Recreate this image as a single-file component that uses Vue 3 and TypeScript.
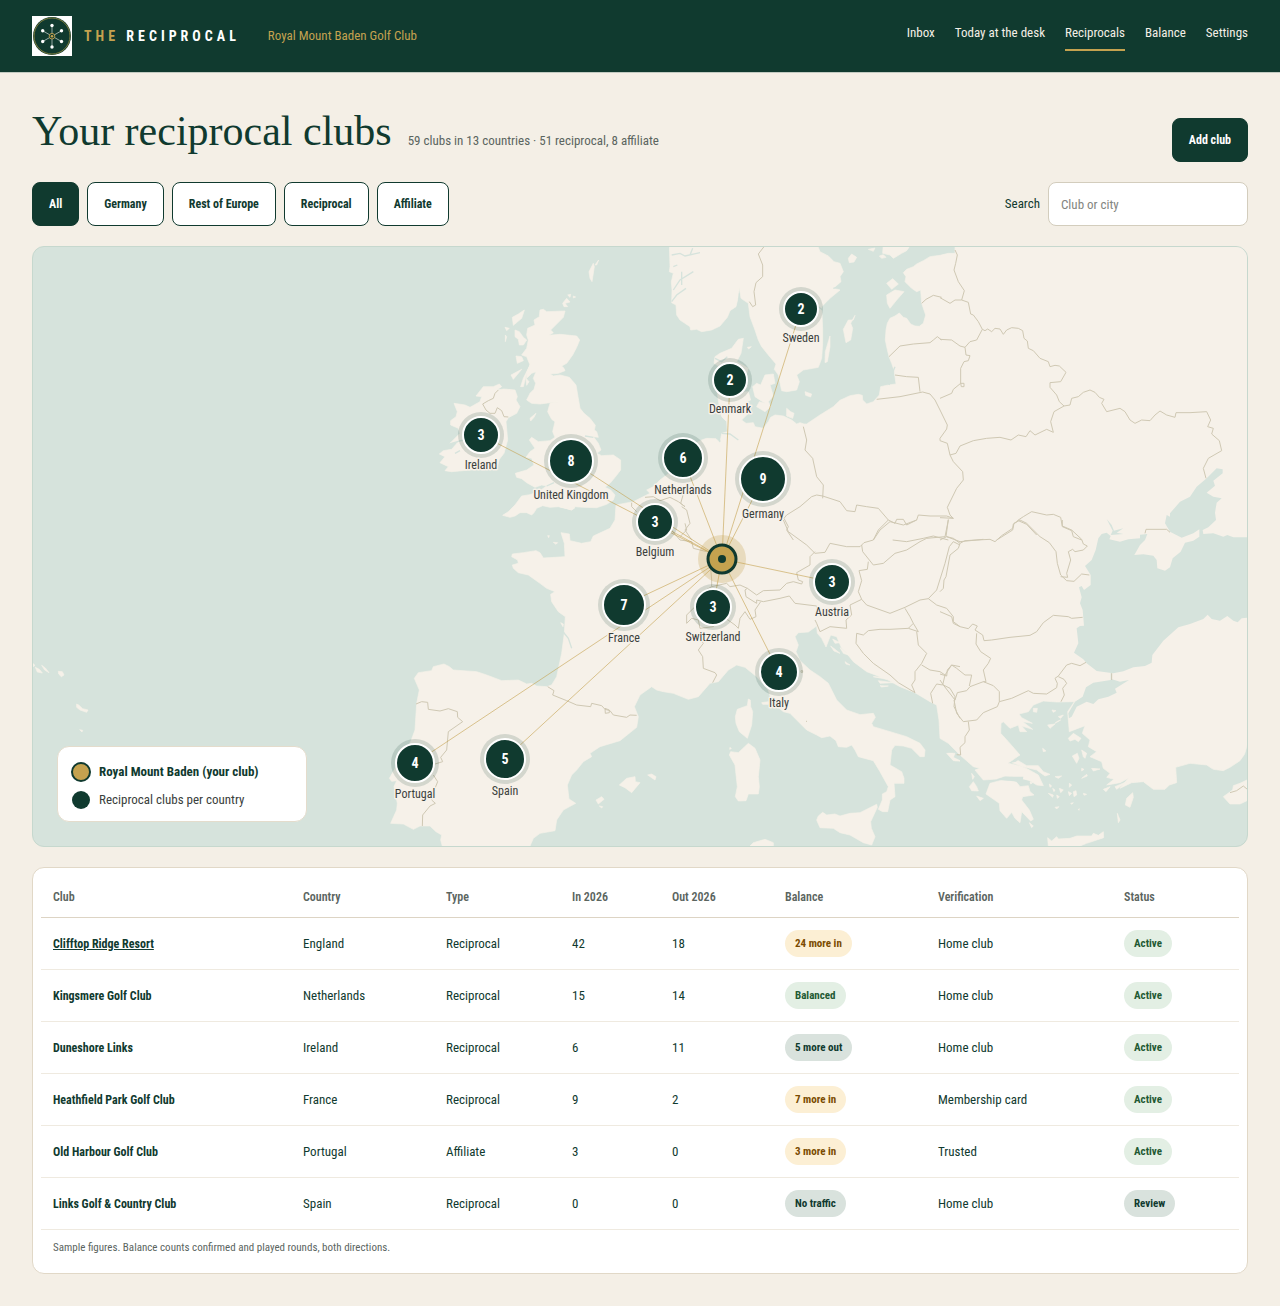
<script setup lang="ts">
import { computed, ref } from 'vue'

interface Pin { name: string; count: number; x: number; y: number; r: number }
interface Club {
  name: string; country: string; type: string; inbound: number; outbound: number
  balance: string; tone: string; verification: string; status: string
}

const navItems = ['Inbox', 'Today at the desk', 'Reciprocals', 'Balance', 'Settings']
const filters = ['All', 'Germany', 'Rest of Europe', 'Reciprocal', 'Affiliate']
const activeFilter = ref('All')
const query = ref('')

const home = { x: 689, y: 312 }
const pins: Pin[] = [
  { name: 'Sweden', count: 2, x: 768, y: 62, r: 17 },
  { name: 'Denmark', count: 2, x: 697, y: 133, r: 17 },
  { name: 'Ireland', count: 3, x: 448, y: 188, r: 18 },
  { name: 'United Kingdom', count: 8, x: 538, y: 214, r: 22 },
  { name: 'Netherlands', count: 6, x: 650, y: 211, r: 20 },
  { name: 'Germany', count: 9, x: 730, y: 232, r: 23 },
  { name: 'Belgium', count: 3, x: 622, y: 275, r: 18 },
  { name: 'Austria', count: 3, x: 799, y: 335, r: 18 },
  { name: 'France', count: 7, x: 591, y: 358, r: 21 },
  { name: 'Switzerland', count: 3, x: 680, y: 360, r: 18 },
  { name: 'Italy', count: 4, x: 746, y: 425, r: 19 },
  { name: 'Portugal', count: 4, x: 382, y: 516, r: 19 },
  { name: 'Spain', count: 5, x: 472, y: 512, r: 20 },
]

const clubs: Club[] = [
  { name: 'Clifftop Ridge Resort', country: 'England', type: 'Reciprocal', inbound: 42, outbound: 18, balance: '24 more in', tone: 'amber', verification: 'Home club', status: 'Active' },
  { name: 'Kingsmere Golf Club', country: 'Netherlands', type: 'Reciprocal', inbound: 15, outbound: 14, balance: 'Balanced', tone: 'green', verification: 'Home club', status: 'Active' },
  { name: 'Duneshore Links', country: 'Ireland', type: 'Reciprocal', inbound: 6, outbound: 11, balance: '5 more out', tone: 'slate', verification: 'Home club', status: 'Active' },
  { name: 'Heathfield Park Golf Club', country: 'France', type: 'Reciprocal', inbound: 9, outbound: 2, balance: '7 more in', tone: 'amber', verification: 'Membership card', status: 'Active' },
  { name: 'Old Harbour Golf Club', country: 'Portugal', type: 'Affiliate', inbound: 3, outbound: 0, balance: '3 more in', tone: 'amber', verification: 'Trusted', status: 'Active' },
  { name: 'Links Golf & Country Club', country: 'Spain', type: 'Reciprocal', inbound: 0, outbound: 0, balance: 'No traffic', tone: 'slate', verification: 'Home club', status: 'Review' },
]

const visibleClubs = computed(() => {
  const q = query.value.trim().toLowerCase()
  return clubs.filter((c) => {
    const f = activeFilter.value
    const passes = f === 'All' || (f === 'Rest of Europe' ? c.country !== 'Germany' : c.country === f || c.type === f)
    return passes && (!q || c.name.toLowerCase().includes(q))
  })
})
</script>

<template>
  <div class="page">
    <header class="topbar">
      <a class="brand" href="#">
        <svg class="logo" viewBox="0 0 40 40" aria-hidden="true">
          <rect width="40" height="40" fill="#fff" />
          <circle cx="20" cy="20" r="19" fill="#103a2f" />
          <circle cx="20" cy="20" r="18" fill="none" stroke="#7c7a3c" stroke-width="1" />
          <g stroke="#b9c7c1" stroke-width="0.8">
            <path d="M20 9.500V31M10.700 14.800L29.500 25.500M29.500 14.800L10.700 25.500" />
          </g>
          <g fill="#fff">
            <circle cx="20" cy="9.500" r="1.700" /><circle cx="20" cy="31" r="1.700" />
            <circle cx="10.700" cy="14.800" r="1.700" /><circle cx="29.500" cy="14.800" r="1.700" />
            <circle cx="10.700" cy="25.500" r="1.700" /><circle cx="29.500" cy="25.500" r="1.700" />
          </g>
          <circle cx="20" cy="20.200" r="2.800" fill="#103a2f" stroke="#c4a24f" stroke-width="0.900" />
          <circle cx="20" cy="20.200" r="1.300" fill="#c4a24f" />
        </svg>
        <span class="wordmark"><span class="gold">THE</span> RECIPROCAL</span>
      </a>
      <span class="club-name">Royal Mount Baden Golf Club</span>
      <nav class="nav">
        <a v-for="item in navItems" :key="item" href="#" :class="{ current: item === 'Reciprocals' }">{{ item }}</a>
      </nav>
    </header>

    <main class="main">
      <div class="title-row">
        <h1>Your reciprocal clubs</h1>
        <p class="summary">59 clubs in 13 countries · 51 reciprocal, 8 affiliate</p>
        <button type="button" class="btn solid add">Add club</button>
      </div>

      <div class="toolbar">
        <button
          v-for="f in filters" :key="f" type="button" class="btn"
          :class="{ solid: f === activeFilter }" @click="activeFilter = f"
        >{{ f }}</button>
        <div class="search">
          <label for="club-search">Search</label>
          <input id="club-search" v-model="query" type="text" placeholder="Club or city" />
        </div>
      </div>

      <section class="map" aria-label="Map of clubs">
        <svg class="map-svg" viewBox="0 0 1214 599">
          <svg x="0" y="0" width="1214" height="599" viewBox="99 741 3642 1797">
            <!-- mainland and Scandinavia -->
            <g class="land" transform="translate(1920 720)">
              <path d="M1830 10L945 10L945 40L925 40L900 46L870 50L850 62L830 72L820 80L800 88L790 98L798 110L795 125L815 145L830 155L842 150L845 190L857 225L850 250L838 259L825 258L812 252L800 235L790 232L778 219L765 228L750 235L742 250L738 270L736 300L741 325L747 350L755 370L762 390L768 432L745 435L722 440L718 465L700 485L680 492L668 480L667 466L655 463L630 467L600 481L580 500L540 525L500 552L492 552L480 548L470 552L455 540L430 528L405 525L392 532L385 545L370 565L345 560L340 548L318 550L305 540L325 520L330 500L320 480L300 470L322 440L315 415L325 385L308 375L290 365L303 340L310 295L295 298L275 325L240 340L225 350L222 370L235 378L225 420L228 430L235 480L240 515L245 530L260 545L262 575L245 580L240 608L228 596L200 595L185 600L150 620L120 655L100 690L60 720L40 740L20 750L30 760L-20 785L-72 795L-75 840L-90 865L-140 888L-148 905L-175 910L-210 902L-212 882L-237 878L-227 910L-225 950L-255 952L-290 954L-300 938L-312 932L-350 938L-383 942L-385 950L-367 960L-365 970L-383 975L-380 985L-365 998L-335 1005L-300 1030L-280 1045L-255 1055L-268 1063L-265 1085L-245 1115L-224 1130L-227 1180L-235 1240L-250 1310L-265 1335L-280 1340L-310 1338L-325 1330L-340 1332L-365 1320L-415 1322L-460 1305L-490 1295L-560 1290L-572 1280L-588 1272L-620 1280L-625 1292L-665 1298L-677 1315L-662 1350L-670 1390L-675 1470L-688 1505L-720 1560L-752 1615L-745 1624L-730 1622L-738 1640L-728 1690L-730 1710L-748 1750L-710 1752L-680 1768L-660 1758L-630 1758L-612 1775L-595 1785L-598 1800L-590 1830L-335 1830L-320 1795L-300 1780L-255 1772L-250 1740L-230 1710L-193 1690L-213 1677L-218 1635L-205 1605L-190 1590L-170 1565L-145 1550L-150 1540L-120 1520L-60 1502L-35 1482L-10 1462L-5 1430L-17 1400L0 1365L35 1340L50 1350L70 1355L100 1360L145 1378L175 1370L210 1330L235 1325L265 1290L290 1275L315 1282L350 1310L385 1350L395 1385L430 1415L450 1420L470 1440L500 1470L530 1485L545 1493L570 1488L588 1502L595 1520L620 1522L635 1515L645 1530L655 1550L700 1562L720 1595L745 1640L740 1655L727 1662L727 1680L715 1708L728 1715L743 1715L750 1680L765 1670L762 1630L792 1630L792 1615L785 1595L750 1575L755 1530L765 1516L790 1518L815 1525L840 1550L853 1550L855 1530L840 1510L800 1490L700 1460L695 1450L706 1432L700 1420L660 1424L620 1410L590 1380L565 1330L540 1310L510 1290L480 1262L468 1235L475 1215L465 1190L475 1178L505 1176L530 1158L532 1180L545 1195L558 1221L572 1185L590 1190L605 1225L620 1240L640 1265L680 1295L740 1318L780 1340L825 1358L870 1385L890 1395L897 1440L900 1495L925 1510L960 1545L1000 1580L1020 1585L1005 1590L1030 1620L1070 1617L1095 1608L1130 1612L1170 1622L1190 1635L1210 1637L1195 1605L1150 1580L1105 1570L1125 1555L1140 1545L1105 1505L1082 1480L1083 1450L1090 1445L1110 1465L1135 1455L1140 1475L1160 1475L1145 1458L1178 1468L1148 1445L1177 1450L1145 1433L1137 1422L1165 1415L1180 1395L1210 1383L1250 1386L1303 1385L1283 1415L1288 1475L1335 1457L1327 1480L1350 1500L1345 1520L1370 1535L1350 1550L1385 1565L1390 1585L1410 1600L1400 1612L1422 1618L1400 1635L1440 1628L1465 1615L1440 1645L1475 1628L1510 1625L1540 1648L1575 1648L1588 1635L1610 1628L1607 1582L1650 1570L1700 1575L1720 1588L1750 1592L1770 1582L1800 1562L1814 1542L1820 1520L1830 1500Z" />
              <path d="M88 10L90 80L88 95L100 100L94 125L96 150L95 188L108 195L110 225L120 240L150 260L152 270L170 268L185 275L215 270L240 258L262 232L270 212L288 200L295 170L298 142L303 175L325 190L330 230L345 270L355 300L365 320L385 345L408 372L403 388L415 405L425 452L440 455L470 450L478 425L470 405L490 390L535 382L545 355L548 310L548 270L545 200L570 175L600 150L580 145L603 125L600 110L610 95L600 70L582 65L565 48L540 35L530 10Z" />
              <path d="M645 226L640 240L625 240L610 268L618 308L632 300L638 265L632 250ZM570 288L556 335L555 368L562 365L570 320ZM495 455L515 462L512 471L497 466ZM350 430L362 435L375 405L400 402L405 430L390 435L400 468L385 485L392 500L375 515L350 500L358 485L375 490L345 470L338 440ZM285 458L325 455L332 480L310 490L295 480ZM440 505L452 515L462 520L458 535L440 528ZM740 165L765 150L792 155L770 180L750 205L742 190ZM740 130L758 116L775 132L755 148ZM625 55L635 42L650 52L642 66L628 68ZM730 10L815 10L800 32L785 40L760 55L750 45L728 40ZM685 28L705 24L700 34ZM718 48L730 44L738 52L725 55ZM322 322L334 320L326 327Z" />
            </g>
            <!-- British Isles -->
            <g class="land" transform="translate(1140 720)">
              <path d="M480 210L490 208L500 215L555 213L550 232L530 252L512 270L520 278L506 286L540 283L590 288L599 300L590 322L578 345L560 370L545 378L552 385L555 392L535 400L510 402L520 408L540 405L568 412L588 435L594 470L600 505L612 520L630 535L646 556L643 570L650 575L655 592L640 590L655 610L663 630L650 640L665 647L700 645L722 660L722 690L705 712L690 730L675 742L692 750L705 765L700 780L680 793L650 803L610 802L585 800L575 810L560 806L535 800L510 802L488 797L470 805L462 818L455 825L440 818L420 818L405 828L390 832L368 826L385 815L405 795L425 768L450 764L480 752L500 738L485 735L465 742L440 728L425 716L410 712L406 700L440 690L462 675L455 655L438 652L450 635L465 625L448 600L455 592L475 605L510 602L525 592L518 575L525 545L515 538L503 515L510 490L535 486L510 488L480 492L455 490L440 480L450 460L462 448L467 430L460 415L468 395L455 400L440 415L440 400L450 375L440 350L425 345L440 325L445 300L440 285L443 265L465 255L462 240L478 230Z" />
              <path d="M358 432L365 440L350 450L372 447L405 450L412 470L408 480L420 500L410 520L385 533L378 545L383 600L372 640L358 658L350 688L270 690L215 695L195 692L205 680L180 668L195 650L178 642L190 632L215 628L235 605L210 610L240 580L235 565L212 555L212 542L228 530L232 515L222 490L255 495L270 502L300 485L305 470L288 468L310 440L340 440Z" />
              <path d="M433 210L425 235L400 256L397 232L415 222ZM405 270L418 275L430 292L440 300L430 315L418 315L415 298L405 290ZM375 262L388 265L380 272ZM376 285L380 290L376 305ZM408 348L425 350L430 362L412 370ZM393 405L425 388L400 418ZM422 440L430 415L455 365L440 400L430 440ZM438 415L447 425L440 436ZM450 535L468 520L462 532L452 543ZM627 95L640 70L643 80L636 125L630 115ZM645 75L656 60L650 75ZM548 190L560 175L570 186L555 190L563 200L552 200ZM563 165L572 163L570 172ZM580 168L587 171L580 174ZM540 800L585 803L575 810ZM503 887L508 887L506 893Z" />
            </g>
            <!-- western and central Mediterranean -->
            <g class="land" transform="translate(1140 1560)">
              <path d="M718 795L740 775L765 770L766 785L780 788L755 818L735 803ZM803 765L815 762L828 770L825 780ZM648 840L665 830L672 838L655 852ZM658 858L668 860L665 864ZM520 67L533 68L528 73ZM542 308L550 312L549 320Z" />
            </g>
            <g class="land" transform="translate(1980 1560)">
              <path d="M470 900L475 888L488 877L500 885L525 882L540 888L570 880L600 878L650 853L652 862L632 905L634 925L645 950L635 975L610 968L570 945L540 938L520 925L480 923ZM265 670L285 685L300 720L295 770L298 800L295 822L265 822L258 842L235 843L226 830L232 800L225 735L208 705L212 695L235 698ZM265 537L271 540L272 560L278 575L275 615L262 655L238 635L228 610L226 590L232 568L262 557ZM270 978L280 968L315 958L340 968L340 985L270 985ZM305 548L325 545L325 553L308 553ZM865 700L885 700L880 712L900 722L885 722ZM210 682L214 686L209 688ZM640 470L670 472L680 478ZM655 482L700 488L660 490ZM660 497L685 498L665 501ZM518 357L540 368L525 370ZM512 378L525 388L540 400L522 393ZM540 383L570 407L550 400ZM555 425L570 435L558 432Z" />
            </g>
            <g class="land" transform="translate(2820 1560)">
              <path d="M150 790L180 782L200 780L230 787L240 800L265 797L270 815L282 825L248 830L245 840L268 870L280 898L272 903L245 875L240 908L225 895L215 877L200 895L180 872L178 850L138 822ZM215 728L235 722L260 737L295 737L310 755L330 763L315 768L290 750L250 740ZM323 953L335 963L350 950L355 957L390 955L410 948L455 948L460 940L475 946L490 935L491 953L440 970L415 980L325 980ZM925 778L900 790L880 797L878 810L850 830L870 852L900 852L925 840ZM578 818L580 832L570 862L556 855L560 835ZM385 655L400 640L423 655L415 665L405 658L390 663ZM397 708L412 700L417 715L410 730ZM425 690L440 700L435 715L430 710ZM455 745L480 747L460 753ZM280 565L292 565L290 577L280 575ZM336 570L348 572L340 577ZM323 615L345 612L330 625ZM345 610L362 600L350 605ZM355 590L370 585L362 595ZM308 685L318 693L310 695ZM95 760L103 770L98 778ZM88 800L100 785L110 800L115 813L95 812ZM110 828L130 835L120 842ZM20 700L40 700L38 715L60 723L40 722ZM425 775L440 763L442 768ZM425 745L432 748L425 753ZM388 790L395 795L388 802ZM385 815L395 820L388 827ZM400 815L408 812L410 825L402 830ZM358 805L370 810L362 818ZM338 805L345 810L342 815ZM328 792L335 798L330 802ZM345 770L365 768L355 775ZM350 825L358 830L352 835ZM345 862L357 860L350 867ZM325 820L340 825L338 832ZM392 850L400 848L396 853ZM430 820L440 823L432 826ZM490 808L510 800L498 815ZM525 800L560 785L530 808ZM532 880L540 900L535 908ZM268 908L280 918L275 923ZM270 785L278 788L272 792ZM415 868L418 866L417 871Z" />
            </g>
            <!-- Azores -->
            <g class="land" transform="translate(60 1920)">
              <path d="M38 70L45 76L40 80ZM46 82L58 88L67 99L52 96ZM65 76L76 84L87 98L74 90ZM115 94L127 95L132 105L124 110L116 102ZM170 192L176 195L188 206L204 210L200 217L180 210L170 202ZM179 269L188 271L186 276Z" />
            </g>

            <!-- Black Sea, Azov, Marmara -->
            <g class="sea" transform="translate(2820 1560)">
              <path d="M475 55L485 42L500 38L512 48L508 58L540 65L565 58L600 55L600 44L622 42L615 60L600 75L583 105L610 103L640 107L650 120L652 145L675 152L690 142L698 115L722 95L735 68L760 62L778 50L778 28L760 40L725 53L690 35L675 10L680 -15L690 -10L690 -20L720 -55L750 -70L770 -100L800 -125L830 -155L848 -152L848 -140L820 -118L825 -103L800 -82L820 -70L845 -65L830 -52L825 -22L828 0L805 22L788 30L790 42L820 40L850 50L862 45L880 52L930 52L930 292L905 295L893 307L880 302L862 288L840 302L815 297L803 284L790 297L750 312L715 322L670 362L637 405L635 428L615 438L580 442L550 454L520 460L470 453L440 430L430 418L402 398L415 370L410 325L420 318L432 317L428 270L420 250L425 232L417 202L425 198L432 210L452 195L452 165L435 138L455 120L467 90Z" />
              <path d="M512 458L516 458L516 478L540 485L567 480L525 506L530 518L505 530L475 538L460 552L440 545L410 560L395 590L387 595L385 580L405 545L428 530L438 502L460 488L512 480ZM204 730L225 720L238 708L228 725ZM170 778L200 770L250 770L248 783L200 782Z" />
              <path d="M500 -3L515 15L522 32L550 25L530 38L550 42L512 45L518 32Z" />
            </g>
            <!-- fjords and estuaries -->
            <g class="inlet" transform="translate(1920 720)">
              <path d="M95 45L120 40L135 48L180 38M150 45L158 25M95 185L110 165L138 145M100 150L120 120L160 95M125 135L125 95M100 80L112 75M295 200L298 160M240 605L235 590M245 580L270 582L295 600M225 355L245 365L262 350M580 145L600 140M535 200L548 210M-235 1170L-215 1195L-205 1225M747 435L755 405L765 380" />
            </g>
            <g class="inlet" transform="translate(1140 720)">
              <path d="M210 612L235 604L250 600M225 640L240 632M500 738L522 728M640 592L615 588" />
            </g>

            <!-- borders, east -->
            <g class="border" transform="translate(2820 720)">
              <path d="M45 30L52 45L47 70L42 90L55 125L73 152L65 180L85 187L92 222L100 225L115 245L127 268L135 272L143 267L155 275L165 265L180 267L190 283L200 270L215 263L235 265L248 272L252 295L262 303L265 325L280 332L300 355L325 365L330 380L345 376L358 378L378 397L362 425L330 428L330 442L350 465L358 485L372 498L390 495L395 475L415 470L430 457L450 450L465 457L478 472L492 478L485 490L500 515L540 505L555 515L570 540L585 550L605 540L630 542L645 525L660 513L680 525L705 532L708 518L750 518L800 515L812 540L803 560L820 565L815 582L838 602L845 632L805 655L790 685L798 715" />
              <path d="M0 173L30 190L45 180L65 180M0 298L35 300L60 318L75 322L90 305L110 300L127 268M75 322L78 345L90 347L85 362L72 365L62 385L62 430L40 448L35 460L0 475M62 430L72 430L72 440L64 440ZM-15 480L0 510L22 555L20 567L0 595L0 602L22 610L30 645L48 640L60 618L100 602L140 595L180 592L213 600L235 585L258 590L270 572L285 585L320 568L340 577L332 545L342 515L372 498M30 645L40 665L68 695L70 720L50 745L22 802L30 825L40 835L0 833M25 838L18 890M0 900L20 890L60 905L130 898M232 842L250 830L275 815L320 825L340 823L362 832L367 860L395 872L400 890L425 900M615 880L618 868L680 868L690 877M170 900L218 870L222 850L235 842L260 853L290 885" />
            </g>
            <g class="border" transform="translate(2820 1560)">
              <path d="M20 50L40 55L60 70L75 62L110 60L150 58L165 65L185 47L218 25L220 12L240 0L260 10L300 50L328 68L348 95L352 130L362 165L380 182L402 184L425 162L448 165M362 170L383 172L380 160L392 120L385 95L398 88L405 95L430 90L442 78L430 72L425 58L395 30L367 18L367 0M60 70L55 85L30 105L18 170L12 180L10 205L0 215M0 275L35 290L40 310L60 320L85 326L98 312L112 318L105 330L128 345L132 362L155 360L210 352L270 346L290 335L310 308L340 286L385 290L395 295L428 292M110 340L108 372L122 395L152 415L145 430L130 450L138 485L130 485L90 500L80 512L52 518L45 540L10 495L0 480M130 485L160 497L178 515L178 545L215 535L265 512L280 520L320 522L350 503L352 490L345 475L355 468L380 435L395 430L420 437L438 427M355 470L372 478L380 490L368 505L373 525L363 545M178 545L172 560L130 578L110 600L70 605L50 580L42 540M85 605L88 630L75 650L75 668L60 682L62 705L50 704M0 462L20 468L22 450L35 435L50 445L75 465L95 465L88 498M870 818L890 812L910 798L922 808M515 460L515 480" />
            </g>
            <!-- borders, north and central -->
            <g class="border" transform="translate(1920 720)">
              <path d="M372 20L355 42L368 75L368 110L348 128L342 155L347 195L338 200L328 185M845 190L858 178L880 166L905 172M747 350L780 318L820 312L870 308L880 300L892 290L905 300M765 405L800 410L835 412L840 455M710 478L780 470L848 456L870 462L885 480M490 560L500 600L495 630L518 655L530 710L550 735L548 775M548 768L530 765L515 770L480 800L440 825L432 835L445 860L440 870L460 900M548 768L600 785L620 812L645 815L650 795L680 800L715 805L745 840L765 850L770 838L790 838L800 855L830 840L835 825L870 828L920 828L940 835M745 840L715 870L700 900M758 900L800 905L850 895L880 888L925 900M15 772L40 770L60 782L90 772L115 785L135 800L122 790L135 745M125 800L140 810L150 850L135 870L155 900" />
            </g>
            <g class="border" transform="translate(1980 1560)">
              <path d="M370 0L385 35L440 75L465 100L495 97L510 70L560 80L600 80L612 68L640 60L660 30L690 5L730 15L770 0M465 95L450 110L450 135L410 158L415 180L428 185L425 192L400 185L380 190L360 210L310 212L290 225L262 205L255 210L258 230L290 250L290 240L310 245L360 235L388 228L405 250L470 258L470 280M210 200L240 195L262 205M150 120L155 180L155 200L200 190L210 200M155 200L120 220L105 260L80 285L80 310L95 295L115 300L120 325L160 320L190 290L225 315L235 325L240 295L255 275L270 298L288 290L285 270L302 245M115 345L130 370L115 390L128 410L130 445L165 458L170 465L158 488M605 75L608 95L640 135L670 130L705 100L740 90L780 65L800 55L855 50L865 0M625 125L622 148L597 152L605 182L595 215L605 238L620 255L690 280L735 262L780 240L805 236L830 210L855 130L868 80L880 65L900 75M605 238L570 255L575 285L558 300L560 325L510 320L480 335L470 310L465 300M735 265L750 290L760 310L745 325L690 328L660 328L625 332L610 345L590 340L588 370L610 400L640 430L690 465L715 488L765 518M770 335L775 375L800 400L785 430L765 455L765 480L755 495L765 518M760 310L775 335L745 325M785 435L810 450L840 455L855 465L848 495L830 492L812 520L818 550M805 236L830 255L860 265L880 290L880 305L900 320M855 465L875 435L900 440M850 495L870 505L885 530L882 560L900 595M60 50L80 30L75 10M0 10L30 25L60 60L95 65L100 85L140 95M423 452h5v5h-5zM438 604h3" />
            </g>
            <g class="border" transform="translate(1140 1560)">
              <path d="M503 500L522 512L518 525L560 542L590 555L632 560L635 550L665 557L675 568L690 572L700 585L740 592L750 585L770 586M675 565L688 570L688 578L676 580ZM108 552L125 545L143 547L145 568L180 573L205 566L232 575L233 592L248 605L205 635L200 690L182 712L188 725L165 732M160 765L173 785L165 805L150 815L155 840L166 850L150 858L128 885L127 918" />
            </g>
            <g class="border" transform="translate(1140 720)">
              <path d="M355 450L345 460L340 475L325 482L308 492L318 510L330 520L345 520L352 503L365 512L372 530L385 531M755 788L755 800L770 815" />
            </g>
          </svg>

          <g class="routes">
            <line v-for="p in pins" :key="p.name" :x1="home.x" :y1="home.y" :x2="p.x" :y2="p.y" />
          </g>
          <g v-for="p in pins" :key="p.name" class="pin">
            <circle class="pin-halo" :cx="p.x" :cy="p.y" :r="p.r + 5" />
            <circle class="pin-dot" :cx="p.x" :cy="p.y" :r="p.r" />
            <text class="pin-count" :x="p.x" :y="p.y + 5">{{ p.count }}</text>
            <text class="pin-label" :x="p.x" :y="p.y + p.r + 16">{{ p.name }}</text>
          </g>
          <circle :cx="home.x" :cy="home.y" r="24" fill="#c4a24f" fill-opacity="0.28" />
          <circle :cx="home.x" :cy="home.y" r="14" fill="#c4a24f" stroke="#103a2f" stroke-width="3" />
          <circle :cx="home.x" :cy="home.y" r="4" fill="#103a2f" />
        </svg>

        <ul class="legend">
          <li class="strong"><span class="key home" />Royal Mount Baden (your club)</li>
          <li><span class="key" />Reciprocal clubs per country</li>
        </ul>
      </section>

      <section class="card">
        <table>
          <colgroup>
            <col class="w-club" /><col class="w-country" /><col class="w-type" /><col class="w-in" />
            <col class="w-out" /><col class="w-balance" /><col class="w-verify" /><col class="w-status" />
          </colgroup>
          <thead>
            <tr>
              <th>Club</th><th>Country</th><th>Type</th><th>In 2026</th>
              <th>Out 2026</th><th>Balance</th><th>Verification</th><th>Status</th>
            </tr>
          </thead>
          <tbody>
            <tr v-for="(c, i) in visibleClubs" :key="c.name">
              <td class="name"><a v-if="i === 0" href="#">{{ c.name }}</a><template v-else>{{ c.name }}</template></td>
              <td>{{ c.country }}</td>
              <td>{{ c.type }}</td>
              <td>{{ c.inbound }}</td>
              <td>{{ c.outbound }}</td>
              <td><span class="pill" :class="c.tone">{{ c.balance }}</span></td>
              <td>{{ c.verification }}</td>
              <td><span class="pill" :class="c.status === 'Active' ? 'green' : 'slate'">{{ c.status }}</span></td>
            </tr>
          </tbody>
        </table>
        <p class="note">Sample figures. Balance counts confirmed and played rounds, both directions.</p>
      </section>
    </main>
  </div>
</template>

<style>
body {
  margin: 0;
  background: #f4efe6;
}
</style>

<style scoped>
* {
  box-sizing: border-box;
}
.page {
  font-family: "Roboto Condensed", "Liberation Sans Narrow", Roboto, sans-serif;
  font-size: 13px;
  line-height: 20px;
  color: #103a2f;
  background: #f4efe6;
}
.topbar {
  display: flex;
  align-items: center;
  height: 73px;
  padding: 0 32px;
  background: #103a2f;
  border-bottom: 1px solid #c3cbc2;
}
.brand {
  display: flex;
  align-items: center;
  gap: 12px;
  color: #fff;
  text-decoration: none;
}
.logo {
  width: 40px;
  height: 40px;
}
.wordmark {
  font-size: 14px;
  font-weight: 700;
  letter-spacing: 4px;
}
.gold {
  color: #c4a24f;
}
.club-name {
  margin-left: 28px;
  color: #c4a24f;
}
.nav {
  display: flex;
  gap: 20px;
  margin-left: auto;
}
.nav a {
  padding-bottom: 4px;
  line-height: 24px;
  color: #f4efe6;
  text-decoration: none;
  border-bottom: 2px solid transparent;
}
.nav a.current {
  border-bottom-color: #c4a24f;
}
.main {
  display: flex;
  flex-direction: column;
  gap: 20px;
  padding: 33px 32px 32px;
}
.title-row {
  display: flex;
  align-items: baseline;
  gap: 16px;
}
h1 {
  margin: 0;
  padding-bottom: 6px;
  font-family: "Liberation Serif", serif;
  font-size: 42px;
  font-weight: 400;
  line-height: 50px;
}
.summary {
  margin: 0;
  color: #5b655f;
}
.btn {
  height: 44px;
  padding: 0 16px;
  font: inherit;
  font-size: 12px;
  font-weight: 700;
  color: #103a2f;
  background: #fff;
  border: 1px solid #103a2f;
  border-radius: 8px;
}
.btn.solid {
  color: #fff;
  background: #103a2f;
}
.add {
  margin-left: auto;
  align-self: flex-end;
}
.toolbar {
  display: flex;
  gap: 8px;
}
.search {
  display: flex;
  align-items: center;
  gap: 8px;
  margin-left: auto;
}
.search input {
  width: 200px;
  height: 44px;
  padding: 0 12px;
  font: inherit;
  color: #103a2f;
  background: #fff;
  border: 1px solid #d3cdbd;
  border-radius: 8px;
}
.search input::placeholder {
  color: #83857f;
}
.map {
  position: relative;
  overflow: hidden;
  background: #d6e3dc;
  border: 1px solid #c6d8ce;
  border-radius: 12px;
}
.map-svg {
  display: block;
  width: 100%;
}
.land {
  fill: #f6f1e9;
  stroke: #f6f1e9;
  stroke-width: 2;
  stroke-linejoin: round;
}
.sea {
  fill: #d6e3dc;
}
.inlet {
  fill: none;
  stroke: #d6e3dc;
  stroke-width: 4;
}
.border {
  fill: none;
  stroke: #cfc8b3;
  stroke-width: 3;
  stroke-linejoin: round;
}
.routes line {
  stroke: #c4a24f;
  stroke-width: 1;
  stroke-opacity: 0.6;
}
.pin text {
  text-anchor: middle;
}
.pin-halo {
  fill: #103a2f;
  fill-opacity: 0.15;
}
.pin-dot {
  fill: #103a2f;
  stroke: #fff;
  stroke-width: 2;
}
.pin-count {
  font-size: 14px;
  font-weight: 700;
  fill: #fff;
}
.pin-label {
  font-size: 12px;
  fill: #3a403c;
  stroke: #f6f1e9;
  stroke-width: 3;
  stroke-linejoin: round;
  paint-order: stroke;
}
.legend {
  position: absolute;
  left: 24px;
  bottom: 24px;
  display: flex;
  flex-direction: column;
  gap: 8px;
  width: 250px;
  margin: 0;
  padding: 15px 13px 11px;
  list-style: none;
  color: #3a403c;
  background: #fff;
  border: 1px solid #e4dccc;
  border-radius: 12px;
}
.legend li {
  display: flex;
  align-items: center;
  gap: 8px;
}
.legend .strong {
  font-weight: 700;
  color: #103a2f;
}
.key {
  width: 18px;
  height: 18px;
  margin: 0 1px;
  background: #103a2f;
  border-radius: 50%;
}
.key.home {
  width: 20px;
  height: 20px;
  margin: 0;
  background: #c4a24f;
  border: 2px solid #103a2f;
}
.card {
  padding: 8px 8px 15px;
  background: #fff;
  border: 1px solid #e1d8c7;
  border-radius: 12px;
}
table {
  width: 100%;
  table-layout: fixed;
  border-collapse: separate;
  border-spacing: 0;
}
.w-club { width: 250px; }
.w-country { width: 143px; }
.w-type { width: 126px; }
.w-in { width: 100px; }
.w-out { width: 113px; }
.w-balance { width: 153px; }
.w-verify { width: 186px; }
.w-status { width: 127px; }
th {
  height: 42px;
  padding: 0 12px;
  font-size: 12px;
  font-weight: 600;
  text-align: left;
  color: #5b655f;
  border-bottom: 1px solid #ddd4c4;
}
td {
  height: 52px;
  padding: 0 12px;
  border-bottom: 1px solid #efeae0;
}
.name {
  font-size: 12px;
  font-weight: 700;
}
.name a {
  color: inherit;
}
.pill {
  display: inline-block;
  padding: 4px 10px;
  font-size: 11px;
  font-weight: 700;
  line-height: 19px;
  border-radius: 14px;
}
.amber {
  color: #7a4b00;
  background: #fcefd4;
}
.green {
  color: #1f5a33;
  background: #e3efe4;
}
.slate {
  color: #103a2f;
  background: #d9e2dd;
}
.note {
  margin: 8px 12px 0;
  font-size: 11px;
  color: #5b655f;
}
</style>
